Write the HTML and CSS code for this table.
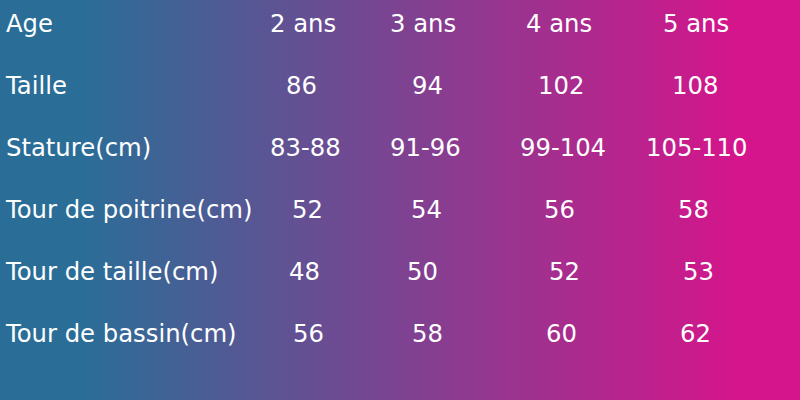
FILE: index.html
```html
<!DOCTYPE html>
<html lang="fr">
<head>
<meta charset="utf-8">
<title>Tableau des tailles</title>
<link rel="stylesheet" href="styles.css">
</head>
<body>
<div class="sizes">
  <div class="row r1"><span>Age</span><span>2 ans</span><span>3 ans</span><span>4 ans</span><span>5 ans</span></div>
  <div class="row r2"><span>Taille</span><span>86</span><span>94</span><span>102</span><span>108</span></div>
  <div class="row r3"><span>Stature(cm)</span><span>83-88</span><span>91-96</span><span>99-104</span><span>105-110</span></div>
  <div class="row r4"><span>Tour de poitrine(cm)</span><span>52</span><span>54</span><span>56</span><span>58</span></div>
  <div class="row r5"><span>Tour de taille(cm)</span><span>48</span><span>50</span><span>52</span><span>53</span></div>
  <div class="row r6"><span>Tour de bassin(cm)</span><span>56</span><span>58</span><span>60</span><span>62</span></div>
</div>
</body>
</html>
```
FILE: styles.css
```css
html, body {
  margin: 0;
  padding: 0;
}
body {
  width: 800px;
  height: 400px;
  overflow: hidden;
  background: linear-gradient(90deg, #2a6e97 10%, #d4158b 92%);
  font-family: "DejaVu Sans", Verdana, sans-serif;
  font-size: 24.3px;
  color: #ffffff;
}
.sizes {
  padding: 10px 0 0 6px;
}
.row {
  display: grid;
  grid-template-columns: 262px 120px 128px 126px 1fr;
  height: 62px;
  line-height: 28px;
  white-space: nowrap;
}
.row > span {
  display: block;
}
.r1 > :nth-child(2) { padding-left: 2px; }
.r1 > :nth-child(3) { padding-left: 2px; }
.r1 > :nth-child(4) { padding-left: 10px; }
.r1 > :nth-child(5) { padding-left: 21px; }
.r2 > :nth-child(2) { padding-left: 18px; }
.r2 > :nth-child(3) { padding-left: 24px; }
.r2 > :nth-child(4) { padding-left: 22px; }
.r2 > :nth-child(5) { padding-left: 30px; }
.r3 > :nth-child(2) { padding-left: 2px; }
.r3 > :nth-child(3) { padding-left: 2px; }
.r3 > :nth-child(4) { padding-left: 4px; }
.r3 > :nth-child(5) { padding-left: 4px; }
.r4 > :nth-child(2) { padding-left: 24px; }
.r4 > :nth-child(3) { padding-left: 23px; }
.r4 > :nth-child(4) { padding-left: 28px; }
.r4 > :nth-child(5) { padding-left: 36px; }
.r5 > :nth-child(2) { padding-left: 21px; }
.r5 > :nth-child(3) { padding-left: 19px; }
.r5 > :nth-child(4) { padding-left: 33px; }
.r5 > :nth-child(5) { padding-left: 41px; }
.r6 > :nth-child(2) { padding-left: 25px; }
.r6 > :nth-child(3) { padding-left: 24px; }
.r6 > :nth-child(4) { padding-left: 30px; }
.r6 > :nth-child(5) { padding-left: 38px; }
```
